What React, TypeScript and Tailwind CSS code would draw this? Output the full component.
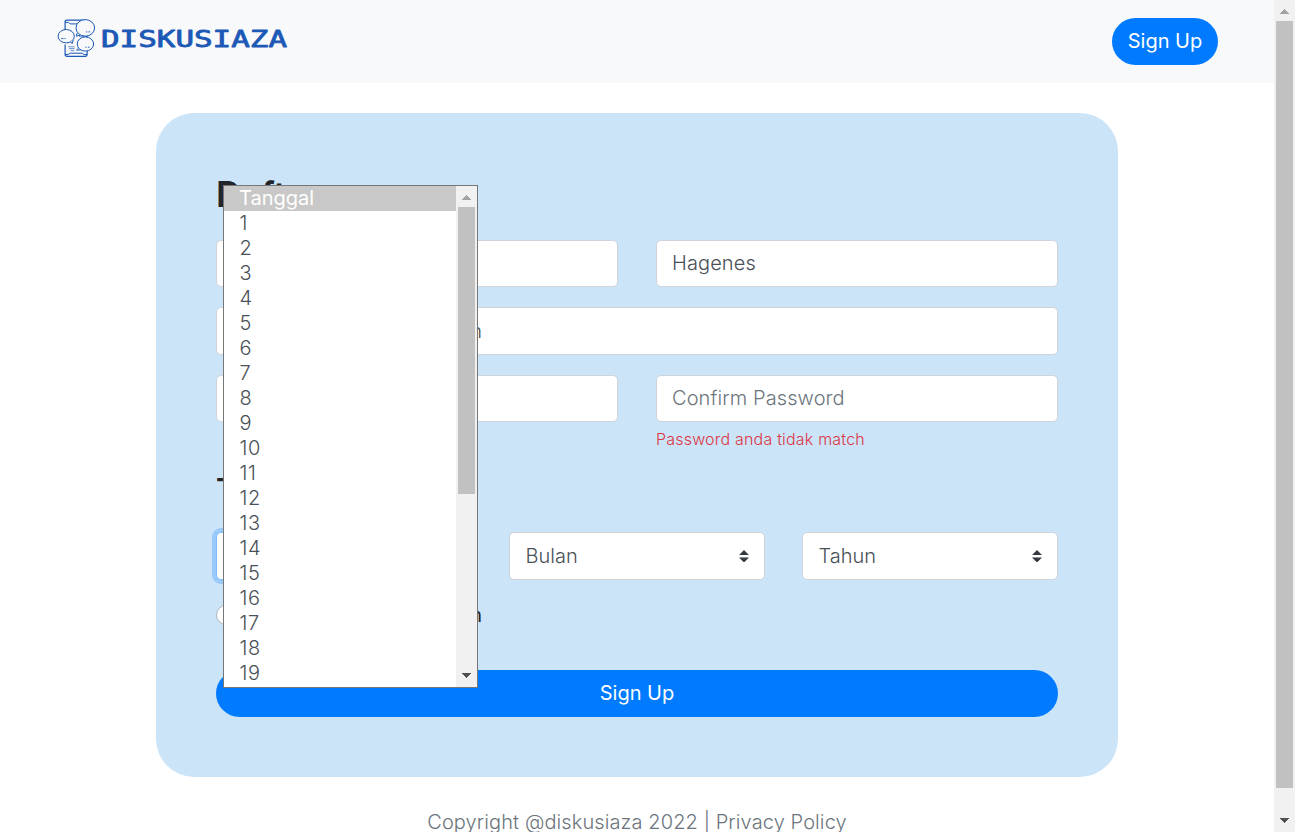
import type { ReactNode } from "react";

const days = ["Tanggal", ...Array.from({ length: 19 }, (_, i) => String(i + 1))];

const fieldClass =
  "rounded-[5px] border border-[#ced4da] bg-white px-[15px] text-[20px] whitespace-nowrap";

function Logo() {
  return (
    <svg width="232" height="42" viewBox="0 0 232 42" fill="none" aria-label="Diskusiaza">
      <g stroke="#1c58b5" strokeWidth="1" transform="translate(-0.9 -0.4)">
        <path d="M9 15V4.2Q9 2.5 11 2.5H29Q31 2.5 31 4.5V37Q31 38.8 29 38.8H11Q9 38.8 9 37V27" strokeWidth="1.2" />
        <path d="M9 4.8H12.5L14 6.3H22M9 37H12L14 35.6H26L28 37H31" />
        <g fill="#f8f9fa">
          <ellipse cx="10.1" cy="18.6" rx="8.1" ry="6.7" />
          <path d="M14.5 24.2L16 26L17.2 22.7" />
          <path d="M21 15.5L20.3 18.5L24.3 17.6" />
          <ellipse cx="29.2" cy="10.3" rx="9.3" ry="8.3" />
          <ellipse cx="29.3" cy="26.4" rx="8.2" ry="7.1" />
          <path d="M22.6 30.5L20.5 32.5L24.8 32.2" />
        </g>
        <path d="M5.2 21H7.3M8.5 21H9.6M30 14.3H31.2M32.4 14.3H34M29.3 29.6H30.5M31.8 29.6H33.3" />
        <path d="M23 18.7H29M12 29.2H18.5M13 31H18.5M14.5 33H18" strokeOpacity=".65" />
      </g>
      <text
        x="44"
        y="28.8"
        fill="#1c58b5"
        stroke="#1c58b5"
        strokeWidth=".8"
        strokeLinejoin="round"
        fontFamily="'DejaVu Sans Mono', monospace"
        fontWeight="400"
        fontSize="22.6"
        textLength="186"
        lengthAdjust="spacingAndGlyphs"
      >
        DISKUSIAZA
      </text>
    </svg>
  );
}

function Field({ children, muted = false }: { children?: ReactNode; muted?: boolean }) {
  return (
    <div className={`${fieldClass} h-[47px] leading-[45px] ${muted ? "tracking-[0.1px] text-[#6c757d]" : "tracking-[0.1px] text-[#495057]"}`}>
      {children}
    </div>
  );
}

function Select({ label, focused = false }: { label?: string; focused?: boolean }) {
  return (
    <div
      className={`flex h-12 items-center justify-between rounded-[5px] border bg-white pr-[15px] pl-[15.5px] text-[20px] text-[#495057] ${
        focused ? "border-[#80bdff] shadow-[0_0_0_4px_rgba(0,123,255,0.25)]" : "border-[#ced4da]"
      }`}
    >
      <span>{label}</span>
      <svg width="10" height="12.5" viewBox="0 0 4 5">
        <path fill="#343a40" d="M2 0L0 2h4zm0 5L0 3h4z" />
      </svg>
    </div>
  );
}

function ArrowUp() {
  return (
    <svg className="block" width="9" height="5" viewBox="0 0 9 5" shapeRendering="crispEdges">
      <path d="M4.5 0L9 5H0Z" fill="#a3a3a3" />
    </svg>
  );
}

function ArrowDown() {
  return (
    <svg className="block" width="9" height="5" viewBox="0 0 9 5" shapeRendering="crispEdges">
      <path d="M0 0H9L4.5 5Z" fill="#505050" />
    </svg>
  );
}

function DayList() {
  return (
    <div className="absolute top-[185px] left-[223px] flex h-[503px] w-[255px] border border-[#767676] bg-white text-[20px] text-[#495057]">
      <ul className="flex-1">
        {days.map((day, i) => (
          <li
            key={day}
            className={`h-[25px] leading-[25px] ${
              i === 0 ? "bg-[#c8c8c8] pl-[15px] font-normal text-white" : "pl-[15.5px] tracking-[0.7px]"
            }`}
          >
            {day}
          </li>
        ))}
      </ul>
      <div className="flex w-[21px] flex-col items-center bg-[#f1f1f1]">
        <div className="flex h-[21px] items-center pt-[2px]">
          <ArrowUp />
        </div>
        <div className="h-[287px] w-[17px] bg-[#c1c1c1]" />
        <div className="mt-auto flex h-[21px] items-center pb-[3px]">
          <ArrowDown />
        </div>
      </div>
    </div>
  );
}

function Radio() {
  return <span className="size-5 shrink-0 rounded-full border border-[#adb5bd] bg-white" />;
}

export default function App() {
  return (
    <div className="relative flex h-[832px] w-[1295px] overflow-hidden bg-white font-['Inter',sans-serif] text-[20px] font-light text-[#212529]">
      <div className="flex w-[1274px] flex-col">
        <header className="flex h-[83px] shrink-0 justify-between bg-[#f8f9fa] pt-[18px] pr-14 pl-[57px]">
          <Logo />
          <button className="h-[47px] w-[106px] rounded-full bg-[#007bff] leading-[47px] font-normal text-white">Sign Up</button>
        </header>

        <main className="mx-auto mt-[30px] h-[664px] w-[962px] shrink-0 rounded-[38px] bg-[#cce4f8] px-[60px] pt-[60px]">
          <h1 className="h-[67px] text-[35px] leading-[42px] font-semibold">Daftar</h1>
          <div className="grid grid-cols-2 gap-x-[38px]">
            <Field />
            <Field>Hagenes</Field>
          </div>
          <div className={`${fieldClass} mt-5 h-12 leading-[47px] text-[#495057]`}>
            <span className="inline-block w-[250px] text-right">hagenes@mail.com.bn</span>
          </div>
          <div className="mt-5 grid grid-cols-2 gap-x-[38px]">
            <Field />
            <div>
              <Field muted>Confirm Password</Field>
              <p className="mt-[5px] text-[16px] leading-6 tracking-[0.2px] text-[#dc3545]">Password anda tidak match</p>
            </div>
          </div>
          <h2 className="mt-5 h-[61px] text-[30px] leading-[36px] font-semibold">Tanggal Lahir</h2>
          <div className="grid grid-cols-3 gap-x-[37px]">
            <Select focused />
            <Select label="Bulan" />
            <Select label="Tahun" />
          </div>
          <div className="mt-5 flex h-[30px] w-[266px] items-center justify-between">
            <Radio />
            <span className="flex items-center gap-2 font-normal">
              <Radio />
              Perempuan
            </span>
          </div>
          <button className="mt-10 block h-[47px] w-full rounded-full bg-[#007bff] leading-[47px] font-normal text-white">Sign Up</button>
        </main>

        <footer className="mt-[30px] text-center leading-[30px] tracking-[0.1px] whitespace-nowrap text-[#6c757d]">
          Copyright @diskusiaza 2022 | Privacy Policy
        </footer>
      </div>

      <div className="flex w-[21px] flex-col items-center bg-[#f1f1f1]">
        <div className="flex h-[21px] items-center pt-[2px]">
          <ArrowUp />
        </div>
        <div className="h-[767px] w-[17px] bg-[#c1c1c1]" />
        <div className="mt-auto flex h-[21px] items-center pb-[3px]">
          <ArrowDown />
        </div>
      </div>

      <DayList />
    </div>
  );
}
